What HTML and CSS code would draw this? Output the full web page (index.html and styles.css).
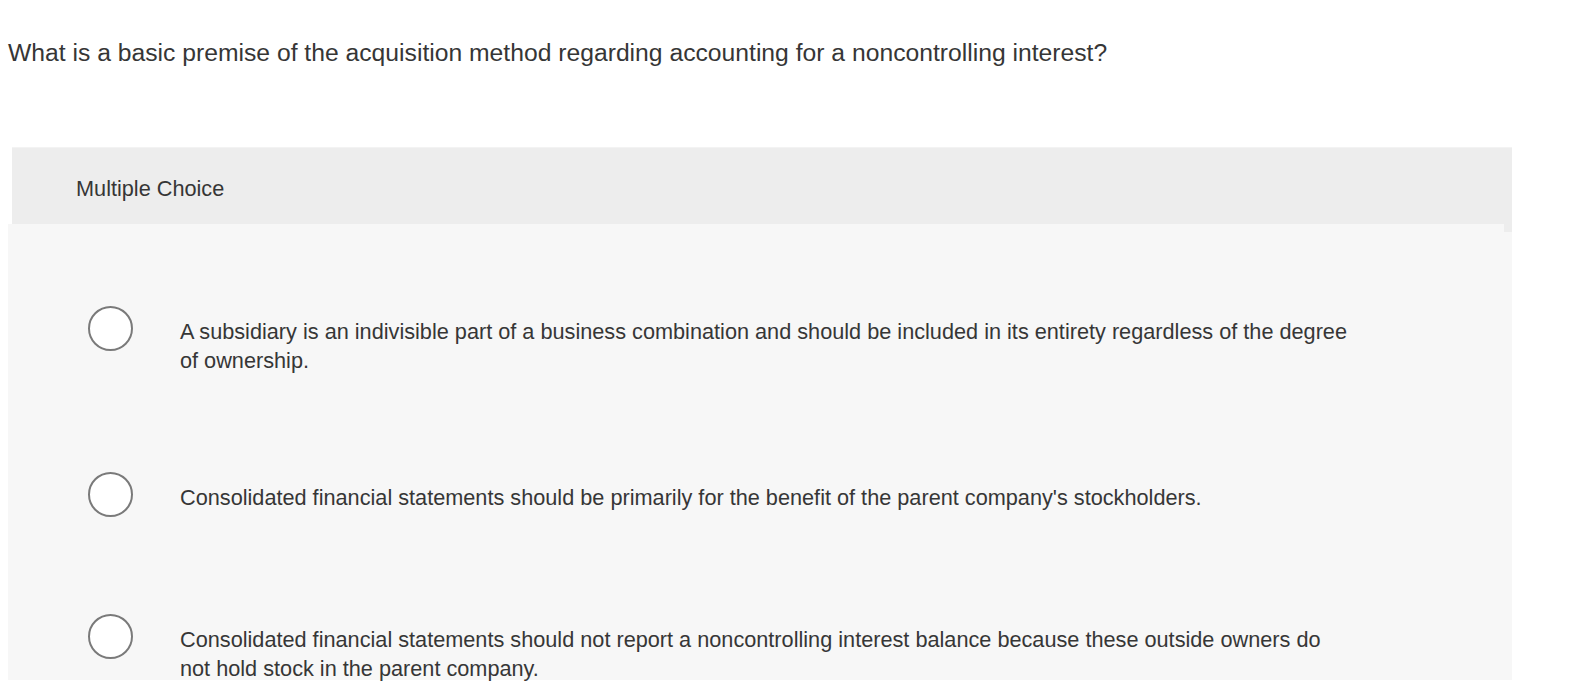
FILE: index.html
```html
<!DOCTYPE html>
<html>
<head>
<meta charset="utf-8">
<link rel="stylesheet" href="styles.css">
</head>
<body>
<div class="page">
  <p class="question">What is a basic premise of the acquisition method regarding accounting for a noncontrolling interest?</p>
  <div class="mc">
    <div class="mc-header">Multiple Choice</div>
    <div class="mc-body">
      <div class="option">
        <span class="radio"></span>
        <span class="label">A subsidiary is an indivisible part of a business combination and should be included in its entirety regardless of the degree of ownership.</span>
      </div>
      <div class="option">
        <span class="radio"></span>
        <span class="label">Consolidated financial statements should be primarily for the benefit of the parent company's stockholders.</span>
      </div>
      <div class="option">
        <span class="radio"></span>
        <span class="label">Consolidated financial statements should not report a noncontrolling interest balance because these outside owners do not hold stock in the parent company.</span>
      </div>
    </div>
  </div>
</div>
</body>
</html>
```

FILE: styles.css
```css
html, body {
  margin: 0;
  padding: 0;
  background: #ffffff;
}
body {
  font-family: "Liberation Sans", Arial, sans-serif;
  color: #363636;
  height: 700px;
  overflow: hidden;
}
.question {
  margin: 0;
  padding: 38px 0 0 8px;
  font-size: 24.7px;
  line-height: 30px;
  height: 147px;
  box-sizing: border-box;
}
.mc-header {
  margin-left: 12px;
  width: 1500px;
  height: 77px;
  box-sizing: border-box;
  background: #ededed;
  padding: 27px 0 0 64px;
  font-size: 21.7px;
  line-height: 28px;
  border-top: 1px solid #f3f3f3;
}
.mc-body {
  margin-left: 8px;
  width: 1504px;
  height: 456px;
  background: #f7f7f7;
  position: relative;
  box-sizing: border-box;
  padding-top: 82px;
  display: flex;
  flex-direction: column;
  gap: 97px;
}
.mc-body::before {
  content: "";
  position: absolute;
  top: 0;
  right: 0;
  width: 8px;
  height: 8px;
  background: #ededed;
}
.option {
  display: flex;
  align-items: flex-start;
}
.radio {
  flex: none;
  width: 41px;
  height: 41px;
  border: 2px solid #7a7a7a;
  border-radius: 50%;
  background: #fff;
  margin-left: 80px;
}
.label {
  margin-left: 47px;
  width: 1172px;
  font-size: 21.7px;
  line-height: 29px;
  padding-top: 11px;
}
```
